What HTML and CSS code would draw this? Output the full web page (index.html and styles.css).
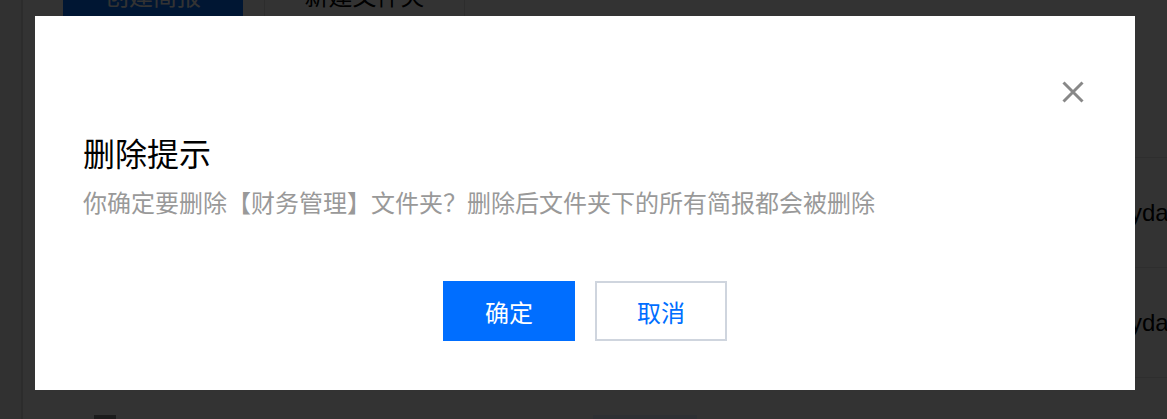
FILE: index.html
```html
<!DOCTYPE html>
<html lang="zh-CN">
<head>
    <meta charset="UTF-8">
    <meta name="viewport" content="width=device-width, initial-scale=1.0">
    <title>删除提示</title>
    <link rel="stylesheet" href="styles.css">
</head>
<body>
    <div class="page">
        <div class="sidebar"></div>
        <div class="main">
            <div class="toolbar">
                <button class="tool-btn primary">创建简报</button>
                <button class="tool-btn outline">新建文件夹</button>
            </div>
            <div class="table">
                <div class="table-head"></div>
                <div class="table-row">
                    <span class="cell-owner">ydata_admin</span>
                </div>
                <div class="table-row">
                    <span class="cell-owner">ydata_admin</span>
                </div>
                <div class="table-row last">
                    <span class="check"></span>
                    <span class="tag"></span>
                </div>
            </div>
        </div>
    </div>

    <!-- 删除确认弹窗 -->
    <div class="mask">
        <div class="dialog">
            <div class="dialog-head">
                <button class="close-btn" aria-label="关闭">
                    <svg width="22" height="22" viewBox="0 0 22 22">
                        <path d="M1.5 1.5 L20.5 20.5 M20.5 1.5 L1.5 20.5" stroke="#888" stroke-width="3" fill="none"/>
                    </svg>
                </button>
            </div>
            <h2 class="dialog-title">删除提示</h2>
            <p class="dialog-text">你确定要删除【财务管理】文件夹？删除后文件夹下的所有简报都会被删除</p>
            <div class="dialog-footer">
                <button class="btn btn-ok">确定</button>
                <button class="btn btn-cancel">取消</button>
            </div>
        </div>
    </div>
</body>
</html>
```

FILE: styles.css
```css
html, body {
    margin: 0;
    height: 100%;
    overflow: hidden;
}
body {
    font-family: "Noto Sans CJK SC", "Noto Sans", sans-serif;
    background-color: #fff;
}
button {
    font-family: inherit;
    cursor: pointer;
}

/* 背景页面 */
.page {
    display: flex;
    height: 100%;
}
.sidebar {
    flex-shrink: 0;
    width: 21px;
    background-color: #f6f6f6;
    border-right: 2px solid #dcdcdc;
}
.main {
    flex: 1;
    min-width: 0;
    padding-left: 40px;
    margin-top: -36px;
}
.toolbar {
    display: flex;
    gap: 21px;
    height: 60px;
}
.tool-btn {
    flex-shrink: 0;
    height: 60px;
    font-size: 24px;
    padding: 0;
    border: 1px solid #e0e0e0;
}
.tool-btn.primary {
    width: 180px;
    background-color: #006eff;
    border-color: #006eff;
    color: #fff;
}
.tool-btn.outline {
    width: 201px;
    background-color: #fff;
    color: #000;
}
.table {
    margin-top: 53px;
}
.table-head {
    height: 80px;
}
.table-row {
    display: flex;
    align-items: center;
    height: 109px;
    border-top: 1px solid #e6e6e6;
}
.cell-owner {
    flex-shrink: 0;
    margin-left: 1067px;
    font-family: "Liberation Sans", Arial, sans-serif;
    font-size: 24px;
    color: #000;
    white-space: nowrap;
}
.table-row.last {
    align-items: flex-start;
}
.check {
    flex-shrink: 0;
    width: 22px;
    height: 22px;
    margin: 37px 0 0 31px;
    background-color: #8c8c8c;
}
.tag {
    flex-shrink: 0;
    width: 104px;
    height: 30px;
    margin: 37px 0 0 477px;
    background-color: #e5eeff;
}

/* 遮罩与弹窗 */
.mask {
    position: fixed;
    inset: 0;
    background-color: rgba(0, 0, 0, 0.8);
    padding: 16px 0 0 35px;
}
.dialog {
    box-sizing: border-box;
    width: 1100px;
    height: 374px;
    background-color: #fff;
    padding: 64px 51px 49px 48px;
}
.dialog-head {
    display: flex;
    justify-content: flex-end;
    height: 24px;
}
.close-btn {
    border: none;
    background: none;
    padding: 0;
    width: 22px;
    height: 22px;
    margin-top: 1px;
}
.close-btn svg {
    display: block;
}
.dialog-title {
    margin: 28px 0 0;
    font-size: 32px;
    line-height: 40px;
    font-weight: normal;
    color: #000;
}
.dialog-text {
    margin: 14px 0 0;
    font-size: 24px;
    line-height: 32px;
    color: #999;
}
.dialog-footer {
    display: flex;
    justify-content: center;
    gap: 20px;
    margin-top: 63px;
    margin-left: 3px;
}
.btn {
    box-sizing: border-box;
    width: 132px;
    height: 60px;
    font-size: 24px;
    padding: 0;
}
.btn-ok {
    background-color: #006eff;
    border: none;
    color: #fff;
}
.btn-cancel {
    background-color: #fff;
    border: 2px solid #cfd5de;
    color: #006eff;
}
```
